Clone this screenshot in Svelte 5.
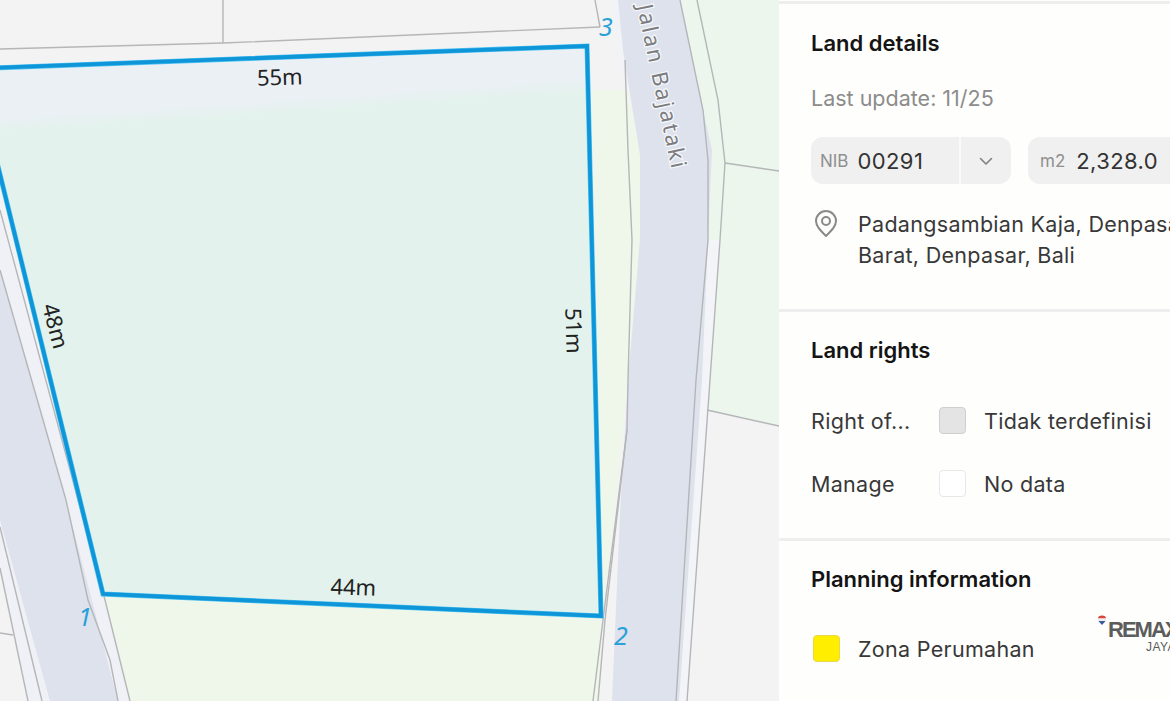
<script>
	const rights = [
		{ label: 'Right of...', value: 'Tidak terdefinisi', fill: '#e4e4e4', edge: '#cfcfcf' },
		{ label: 'Manage', value: 'No data', fill: '#ffffff', edge: '#e8e8e8' }
	];

	const lengths = [
		{ text: '55m', x: 280, y: 85, rotate: -2 },
		{ text: '48m', x: 48, y: 328, rotate: 75 },
		{ text: '51m', x: 566, y: 331, rotate: 88 },
		{ text: '44m', x: 353, y: 595, rotate: 2 }
	];

	const corners = [
		{ text: '1', x: 85, y: 626 },
		{ text: '2', x: 621, y: 645 },
		{ text: '3', x: 606, y: 36 }
	];
</script>

<div class="page">
	<!-- Map -->
	<div class="map">
		<svg viewBox="0 0 779 701" width="779" height="701">
			<defs>
				<clipPath id="parcel-clip">
					<polygon points="-10,68 587,46 601,616 103,594 -6,150" />
				</clipPath>
				<filter id="soft" x="-10%" y="-50%" width="120%" height="200%">
					<feGaussianBlur stdDeviation="6" />
				</filter>
			</defs>
			<rect width="779" height="701" fill="#f4f3f4" />

			<!-- green areas -->
			<polygon points="697,0 779,0 779,426 707,410 725,163" fill="#ecf6ec" />
			<polygon points="682,0 697,0 718,100 725,163 720,240 708,240 712,150 703,110" fill="#ecf6ec" />
			<polygon points="592,90 628,90 640,155 640,240 628,380 603,620 598,701 130,701 103,594 601,616" fill="#eff7ea" />

			<!-- main road -->
			<polygon points="708,240 720,240 710,380 687,701 676,701 696,380" fill="#f3f4f8" />
			<polygon points="610,0 618,0 623,50 628,90 620,70" fill="#f1f3f7" />
			<polygon points="618,0 680,0 703,110 712,150 708,240 702,380 679,701 612,701 620,513 628,380 640,240 640,155 623,50" fill="#dde2ed" />

			<!-- left road -->
			<polygon points="0,500 50,701 28,701 0,568" fill="#f0f1f6" />
			<polygon points="0,270 66,500 92,600 118,701 50,701 0,520" fill="#dde2ed" />
			<polygon points="0,210 105,600 130,701 118,701 92,600 66,500 0,270" fill="#eff1f6" />

			<!-- parcel fill -->
			<polygon points="-10,68 587,46 601,616 103,594 -6,150" fill="#e3f2ec" />
			<g clip-path="url(#parcel-clip)">
				<polygon points="-20,40 600,30 600,84 300,105 -20,126" fill="#ebf0f5" filter="url(#soft)" />
			</g>

			<!-- boundary lines -->
			<g class="edges">
				<polyline points="0,49 223,43 600,27" />
				<polyline points="223,0 223,43" />
				<polyline points="595,0 600,27" />
				<polyline points="680,0 703,110 708,160 708,240 696,380 676,701" />
				<polyline points="697,0 718,100 725,163 720,240 710,380 687,701" />
				<polyline points="625,60 628,150 632,240 628,380 627,430 603,620 593,701" />
				<polyline points="627,430 605,620 598,701" />
				<polyline points="725,163 779,171" />
				<polyline points="707,410 779,426" />
				<polyline points="0,210 105,600 130,701" />
				<polyline points="0,270 66,500 88,600 110,660 118,701" />
				<polyline points="0,527 42,701" />
				<polyline points="0,568 28,701" />
				<polyline points="0,633 13,635" />
			</g>

			<text class="road" x="0" y="0" transform="translate(637 6) rotate(78)">Jalan Bajataki</text>

			<!-- parcel outline -->
			<polygon class="halo" points="-10,68 587,46 601,616 103,594 -6,150" />
			<polygon class="parcel" points="-10,68 587,46 601,616 103,594 -6,150" />

			{#each lengths as l}
				<text class="length" text-anchor="middle" transform="translate({l.x} {l.y}) rotate({l.rotate})">{l.text}</text>
			{/each}
			{#each corners as c}
				<text class="corner" text-anchor="middle" x={c.x} y={c.y}>{c.text}</text>
			{/each}
		</svg>
	</div>

	<!-- Side panel -->
	<aside class="panel">
		<section class="details">
			<h2>Land details</h2>
			<p class="updated">Last update: 11/25</p>
			<div class="fields">
				<div class="field nib">
					<span class="key">NIB</span>
					<span class="value">00291</span>
					<span class="caret">
						<svg viewBox="0 0 16 16" width="16" height="16" fill="none" stroke="#808080" stroke-width="1.6" stroke-linecap="round" stroke-linejoin="round"><path d="M2.5 5.5 8 11l5.5-5.5" /></svg>
					</span>
				</div>
				<div class="field area">
					<span class="key">m2</span>
					<span class="value">2,328.0</span>
				</div>
			</div>
			<div class="address">
				<svg viewBox="0 0 24 30" width="24" height="30" fill="none" stroke="#8a8a8a" stroke-width="2"><path d="M12 27C6 21 2 17 2 12a10 10 0 0 1 20 0c0 5-4 9-10 15Z" stroke-linejoin="round" /><circle cx="12" cy="12" r="4" /></svg>
				<p>Padangsambian Kaja, Denpasar Barat, Denpasar, Bali</p>
			</div>
		</section>

		<section class="rights">
			<h2>Land rights</h2>
			<div class="rows">
				{#each rights as r}
					<div class="row">
						<span class="label">{r.label}</span>
						<span class="swatch" style="background: {r.fill}; border-color: {r.edge}"></span>
						<span class="text">{r.value}</span>
					</div>
				{/each}
			</div>
		</section>

		<section class="planning">
			<h2>Planning information</h2>
			<div class="zone">
				<span class="swatch yellow"></span>
				<span class="text">Zona Perumahan</span>
			</div>
		</section>

		<!-- watermark -->
		<div class="logo">
			<svg viewBox="0 0 10 10" width="10" height="11"><path d="M1 3a4 3 0 0 1 8 0Z" fill="#d9453d" /><rect x="1" y="3" width="8" height="2.4" fill="#eee" /><path d="M1.4 5.4h7.2L5 9.5Z" fill="#3d5a9e" /></svg>
			<div class="logo-text">
				<span class="brand">REMAX</span>
				<span class="city">JAYA</span>
			</div>
		</div>
	</aside>
</div>

<style>
	:global(body) {
		margin: 0;
		background: #fff;
	}

	.page {
		display: flex;
		width: 1170px;
		height: 701px;
		overflow: hidden;
		font-family: Inter, "Liberation Sans", sans-serif;
	}

	/* ── Map ───────────────────────────── */
	.map {
		flex: none;
		width: 779px;
		height: 701px;
	}
	.map svg {
		display: block;
	}
	.edges polyline {
		fill: none;
		stroke: #b4b6b8;
		stroke-width: 1.4;
	}
	.halo {
		fill: none;
		stroke: #4fc3f2;
		stroke-width: 5;
		stroke-linejoin: miter;
	}
	.parcel {
		fill: none;
		stroke: #0e96d8;
		stroke-width: 3.8;
		stroke-linejoin: miter;
	}
	.road {
		font-family: "Noto Sans", sans-serif;
		font-size: 22px;
		letter-spacing: 2.2px;
		fill: #7b7d80;
		stroke: #f6f7fa;
		stroke-width: 2.5;
		paint-order: stroke;
	}
	.length {
		font-family: "Noto Sans", sans-serif;
		font-size: 22px;
		fill: #222;
	}
	.corner {
		font-family: "Noto Sans", sans-serif;
		font-size: 25px;
		font-style: italic;
		fill: #2aa0d8;
	}

	/* ── Panel ─────────────────────────── */
	.panel {
		position: relative;
		flex: none;
		width: 391px;
		height: 701px;
		overflow: hidden;
		background: #fefefd;
	}
	section {
		width: 480px;
		box-sizing: border-box;
		padding-left: 32px;
		border-top: 3px solid #eeeeee;
	}
	h2 {
		margin: 0;
		font-size: 22px;
		line-height: 28px;
		font-weight: 600;
		color: #141414;
	}
	.details {
		height: 308px;
		margin-top: 1px;
		padding-top: 25px;
	}
	.updated {
		margin: 27px 0 0;
		font-size: 21.5px;
		line-height: 28px;
		color: #8c8c8c;
	}
	.fields {
		display: flex;
		gap: 17px;
		margin-top: 25px;
	}
	.field {
		display: flex;
		align-items: center;
		height: 47px;
		border-radius: 12px;
		background: #f0f0f0;
		box-sizing: border-box;
	}
	.nib {
		width: 200px;
		padding-left: 9px;
	}
	.area {
		width: 190px;
		padding-left: 12px;
	}
	.area .key {
		margin-right: 11px;
	}
	.key {
		font-size: 17px;
		color: #8f8f8f;
		margin-right: 9px;
	}
	.value {
		font-size: 22px;
		color: #333;
		letter-spacing: 0.4px;
	}
	.caret {
		display: flex;
		align-items: center;
		justify-content: center;
		width: 50px;
		height: 100%;
		margin-left: auto;
		border-left: 2px solid #fafafa;
	}
	.address {
		display: flex;
		align-items: flex-start;
		gap: 20px;
		margin-top: 25px;
		padding-left: 3px;
	}
	.address p {
		margin: 0;
		width: 340px;
		font-size: 21.5px;
		line-height: 31px;
		color: #383838;
		letter-spacing: 0.3px;
	}
	.rights {
		height: 229px;
		padding-top: 24px;
	}
	.rows {
		display: flex;
		flex-direction: column;
		gap: 36px;
		margin-top: 43px;
	}
	.row {
		display: flex;
		align-items: center;
		height: 27px;
	}
	.label {
		width: 128px;
		font-size: 21.5px;
		color: #383838;
		letter-spacing: 0.3px;
	}
	.swatch {
		flex: none;
		width: 27px;
		height: 27px;
		box-sizing: border-box;
		border: 1.5px solid;
		border-radius: 4px;
	}
	.text {
		margin-left: 18px;
		font-size: 21.5px;
		color: #383838;
		letter-spacing: 0.3px;
	}
	.planning {
		padding-top: 24px;
	}
	.zone {
		display: flex;
		align-items: center;
		margin-top: 42px;
		padding-left: 2px;
	}
	.yellow {
		background: #ffee00;
		border-color: #e8d94a;
	}
	.logo {
		position: absolute;
		left: 318px;
		top: 615px;
		display: flex;
		align-items: flex-start;
		gap: 1px;
	}
	.logo-text {
		display: flex;
		flex-direction: column;
		align-items: center;
		flex: none;
		width: 106px;
		margin-top: 5px;
	}
	.brand {
		align-self: flex-start;
		font-family: "Liberation Sans", sans-serif;
		font-size: 22px;
		line-height: 20px;
		font-weight: 700;
		letter-spacing: -2px;
		color: #5c5c5c;
	}
	.city {
		font-family: "Liberation Sans", sans-serif;
		font-size: 12px;
		line-height: 14px;
		color: #5c5c5c;
		letter-spacing: 0.5px;
	}
</style>
